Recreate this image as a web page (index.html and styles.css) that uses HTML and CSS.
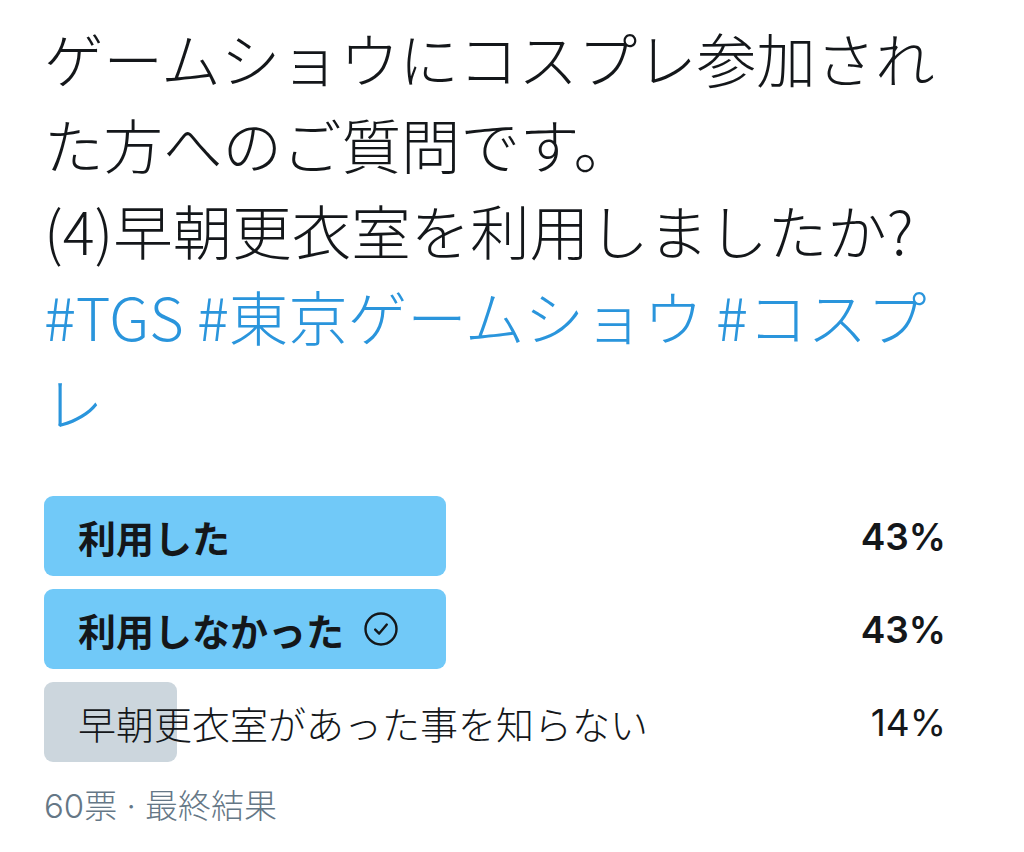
FILE: index.html
```html
<!DOCTYPE html>
<html>
 <head>
 	<title>Poll</title>
 	<link rel="stylesheet" href="styles.css">
 </head>
 <body>
 	<div class="tweet">
 		<p class="tweet-text">ゲームショウにコスプレ参加された方へのご質問です。<br>(4)早朝更衣室を利用しましたか?<br><a class="hashtag" href="#">#TGS</a> <a class="hashtag" href="#">#東京ゲームショウ</a> <a class="hashtag" href="#">#コスプレ</a></p>
 		<div class="poll">
 			<div class="choice choice-winner">
 				<div class="choice-bar" style="width: 402px"></div>
 				<span class="choice-label">利用した</span>
 				<span class="choice-pct">43%</span>
 			</div>
 			<div class="choice choice-winner">
 				<div class="choice-bar" style="width: 402px"></div>
 				<span class="choice-label">利用しなかった
 					<svg class="check" width="34" height="34" viewBox="0 0 34 34">
 						<circle cx="17" cy="17" r="15.5" fill="none" stroke="#14171a" stroke-width="2.4"/>
 						<path d="M11.2 17.6 L15.2 21.6 L22.8 12.6" fill="none" stroke="#14171a" stroke-width="2.4" stroke-linecap="round" stroke-linejoin="round"/>
 					</svg>
 				</span>
 				<span class="choice-pct">43%</span>
 			</div>
 			<div class="choice choice-loser">
 				<div class="choice-bar" style="width: 133px"></div>
 				<span class="choice-label">早朝更衣室があった事を知らない</span>
 				<span class="choice-pct">14%</span>
 			</div>
 		</div>
 		<div class="poll-meta">60票 · 最終結果</div>
 	</div>
 </body>
</html>
```

FILE: styles.css
```css
	body {
		margin: 0;
		background: #fff;
		color: #14171a;
		font-family: "Noto Sans CJK JP", sans-serif;
	}
	.tweet {
		padding: 14px 0 0 44px;
	}
	.tweet-text {
		margin: 0;
		width: 940px;
		font-size: 59.5px;
		font-weight: 300;
		line-height: 86px;
	}
	.hashtag {
		color: #2a95dc;
		text-decoration: none;
	}
	.poll {
		width: 902px;
		margin-top: 52px;
		display: flex;
		flex-direction: column;
		gap: 13px;
	}
	.choice {
		position: relative;
		height: 80px;
		display: flex;
		align-items: center;
		justify-content: space-between;
		font-size: 38px;
		font-weight: 300;
	}
	.choice-bar {
		position: absolute;
		left: 0;
		top: 0;
		bottom: 0;
		border-radius: 9px;
		background: #71c9f8;
	}
	.choice-loser .choice-bar {
		background: #ccd6dd;
	}
	.choice-label {
		position: relative;
		display: flex;
		align-items: center;
		padding-left: 34px;
	}
	.choice-pct {
		position: relative;
		font-family: Inter, sans-serif;
		font-size: 37px;
		font-weight: 400;
	}
	.choice-winner .choice-label {
		font-weight: 700;
	}
	.choice-winner .choice-pct {
		font-weight: 600;
	}
	.check {
		margin-left: 20px;
	}
	.poll-meta {
		margin-top: 22px;
		font-family: Inter, "Noto Sans CJK JP", sans-serif;
		font-size: 33px;
		font-weight: 300;
		line-height: 44px;
		color: #657786;
	}
```
